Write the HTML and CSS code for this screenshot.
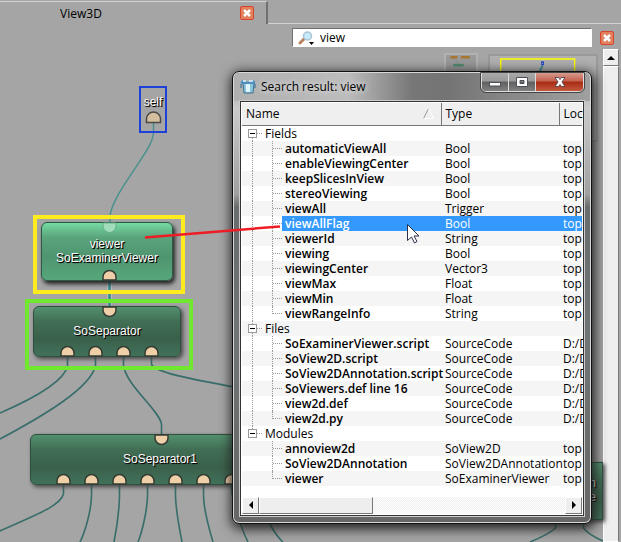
FILE: index.html
```html
<!DOCTYPE html>
<html lang="en">
<head>
<meta charset="utf-8">
<title>View3D</title>
<link rel="stylesheet" href="styles.css">
</head>
<body>
<div class="app">
  <header class="tabs">
    <div class="tab"><span class="tab-title">View3D</span><button class="close" aria-label="Close tab"><svg viewBox="0 0 12 12"><path d="M3 3l6 6M9 3l-6 6"/></svg></button></div>
    <div class="tab-rest"></div>
  </header>
  <div class="search-row">
    <label class="search">
      <svg class="lens" viewBox="0 0 18 14"><path d="M2 12l5-5" stroke="#b98260" stroke-width="3" stroke-linecap="round"/><circle cx="9.500" cy="5" r="4" fill="#c5ebfa" stroke="#a9c4d6" stroke-width="1.500"/><path d="M11 11h5l-2.500 3z" fill="#000"/></svg>
      <input type="text" value="view" aria-label="Search">
    </label>
    <button class="close" aria-label="Close search"><svg viewBox="0 0 12 12"><path d="M3 3l6 6M9 3l-6 6"/></svg></button>
  </div>
  <main class="workspace">
    <div class="vbar"><button class="sb" aria-label="Scroll up"><svg viewBox="0 0 8 8"><path d="M4 2l4 4H0z"/></svg></button><div class="vthumb"></div></div>
  </main>

  <div class="overview small"><svg viewBox="0 0 34 40"><path d="M5 1h8v3H5zM17 1h10v3H17z" fill="#a8762c"/><path d="M9 4l6 6" stroke="#678" stroke-dasharray="1 1"/><path d="M8 10h12v3H8z" fill="#4f8a6c"/></svg></div>
  <div class="overview large"><svg viewBox="0 0 109 86"><path d="M11 40V3h76v37" fill="none" stroke="#ff0" stroke-width="1.500"/><path d="M54 10l-4 8" stroke="#3f8f8c" stroke-width="2"/><rect x="53" y="6" width="2" height="3" fill="#aac" stroke="#2746c4"/></svg></div>

  <svg class="wires" width="621" height="542" aria-hidden="true">
    <g fill="none" stroke="#4a918d" stroke-width="1.500">
      <path d="M153.500 122V133C153 151 113 191 110 216V224"/>
      <path d="M109.500 281V307" stroke="#b9cccc" stroke-width="4"/><path d="M109.500 281V307" stroke="#36858b" stroke-width="2.500"/>
    </g>
    <g fill="none" stroke="#376d6a" stroke-width="1.600">
      <path d="M67.500 357V366C64 382 30 400 0 413"/>
      <path d="M95.500 357V366C90 388 45 415 0 439"/>
      <path d="M123.500 357V366C127 386 159 410 161.500 424V434"/>
      <path d="M151.500 357V364C153 372 190 379 240 388"/>
      <path d="M63.500 485V494C60 507 30 517 0 531"/>
      <path d="M91.500 485V496C91 512 85 532 80 542"/>
      <path d="M119.500 485V496C119 515 116 532 114 542"/>
      <path d="M147.500 485V496C147 512 142 532 138 542"/>
      <path d="M175.500 485V496C176 512 180 532 182 542"/>
      <path d="M203.500 485V496C204 512 210 532 213 542"/>
      <path d="M231.500 485C231 500 242 530 248 542M260 500C266 520 276 536 283 542"/>
      <path d="M555.500 518V528C550 533 540 538 530 542M583.500 518V528C588 534 596 538 603 541"/>
    </g>
  </svg>

  <section class="node self"><span>self</span></section>
  <div class="halo yellow"></div>
  <div class="halo green"></div>
  <section class="node viewer"><span>viewer<br>SoExaminerViewer</span></section>
  <section class="node separator"><span>SoSeparator</span></section>
  <section class="node separator1"><span>SoSeparator1</span></section>
  <section class="node remote"><span>h<br>e</span></section>

  <svg class="ports" width="621" height="542" aria-hidden="true">
    <defs>
      <path id="out" d="M-6.500 0V-3A6.500 6.500 0 0 1 6.500-3V0z" fill="#efcfa8" stroke="#333b33" stroke-width="1.500"/>
      <path id="in" d="M-6.500 0V3A6.500 6.500 0 0 0 6.500 3V0z" fill="#efcfa8" stroke="#333b33" stroke-width="1.500"/>
    </defs>
    <path d="M146.500 122.500V119a7 7 0 0 1 14 0v3.500z" fill="#d5bda0" stroke="#4c4a46" stroke-width="1.500"/>
    <path d="M103 223V226a6.500 6.500 0 0 0 13 0V223z" fill="#a1dcbc" stroke="#67b088"/>
    <use href="#out" x="109.500" y="280"/><use href="#in" x="109.500" y="307"/>
    <use href="#out" x="67.500" y="356"/><use href="#out" x="95.500" y="356"/><use href="#out" x="123.500" y="356"/><use href="#out" x="151.500" y="356"/>
    <use href="#in" x="161.500" y="435"/>
    <use href="#out" x="63.500" y="484"/><use href="#out" x="91.500" y="484"/><use href="#out" x="119.500" y="484"/><use href="#out" x="147.500" y="484"/><use href="#out" x="175.500" y="484"/><use href="#out" x="203.500" y="484"/><use href="#out" x="231.500" y="484"/>
  </svg>

  <section class="window">
    <header class="titlebar">
      <svg class="app-icon" viewBox="0 0 16 16"><path d="M3 5h11l-1 10H4z" fill="#8cc4dc" stroke="#3d718e"/><path d="M6 6h4v8H6z" fill="#dff4fb"/><path d="M1 3l3-1 4 2 4-2 3 1v3H1z" fill="#4f8fbd"/><path d="M3 3h3M9 3h4" stroke="#e8f6ff" stroke-width="1.500"/><path d="M1 6v4M15 6v4" stroke="#2f6a92"/></svg>
      <h1>Search result: view</h1>
      <div class="controls">
        <button aria-label="Minimize"><svg viewBox="0 0 14 12"><rect x="1.500" y="6.500" width="11" height="3.500" fill="#fff" stroke="#4c5058"/></svg></button>
        <button aria-label="Maximize"><svg viewBox="0 0 14 12"><path d="M1.500 1.500h11v9h-11zM5 4.500v3h4v-3z" fill="#fff" fill-rule="evenodd" stroke="#4c5058"/></svg></button>
        <button class="quit" aria-label="Close"><svg viewBox="0 0 14 12"><path d="M2 1.500h3.500L7 3.500l1.500-2H12L9 6l3 4.500H8.500L7 8.500l-1.500 2H2L5 6z" fill="#fff" stroke="#5a4a50"/></svg></button>
      </div>
    </header>
    <div class="content">
      <table>
        <colgroup><col class="c-name"><col class="c-type"><col></colgroup>
        <thead><tr><th>Name<svg class="sort" viewBox="0 0 11 11"><path d="M0.500 10.500L5.500 0.500" stroke="#999"/><path d="M5.500 0.500l5 10h-10" stroke="#fff" fill="none"/></svg></th><th>Type</th><th>Loc</th></tr></thead>
        <tbody>
          <tr class="group first"><td colspan="3"><button class="toggle" aria-label="Collapse Fields"></button>Fields</td></tr>
          <tr><td>automaticViewAll</td><td>Bool</td><td>top</td></tr>
          <tr><td>enableViewingCenter</td><td>Bool</td><td>top</td></tr>
          <tr><td>keepSlicesInView</td><td>Bool</td><td>top</td></tr>
          <tr><td>stereoViewing</td><td>Bool</td><td>top</td></tr>
          <tr><td>viewAll</td><td>Trigger</td><td>top</td></tr>
          <tr class="selected"><td>viewAllFlag</td><td>Bool</td><td>top</td></tr>
          <tr><td>viewerId</td><td>String</td><td>top</td></tr>
          <tr><td>viewing</td><td>Bool</td><td>top</td></tr>
          <tr><td>viewingCenter</td><td>Vector3</td><td>top</td></tr>
          <tr><td>viewMax</td><td>Float</td><td>top</td></tr>
          <tr><td>viewMin</td><td>Float</td><td>top</td></tr>
          <tr class="last"><td>viewRangeInfo</td><td>String</td><td>top</td></tr>
          <tr class="group"><td colspan="3"><button class="toggle" aria-label="Collapse Files"></button>Files</td></tr>
          <tr><td>SoExaminerViewer.script</td><td>SourceCode</td><td>D:/D</td></tr>
          <tr><td>SoView2D.script</td><td>SourceCode</td><td>D:/D</td></tr>
          <tr><td>SoView2DAnnotation.script</td><td>SourceCode</td><td>D:/D</td></tr>
          <tr><td>SoViewers.def line 16</td><td>SourceCode</td><td>D:/D</td></tr>
          <tr><td>view2d.def</td><td>SourceCode</td><td>D:/D</td></tr>
          <tr class="last"><td>view2d.py</td><td>SourceCode</td><td>D:/D</td></tr>
          <tr class="group end"><td colspan="3"><button class="toggle" aria-label="Collapse Modules"></button>Modules</td></tr>
          <tr class="tail"><td>annoview2d</td><td>SoView2D</td><td>top</td></tr>
          <tr class="tail"><td>SoView2DAnnotation</td><td>SoView2DAnnotation</td><td>top</td></tr>
          <tr class="tail last"><td>viewer</td><td>SoExaminerViewer</td><td>top</td></tr>
        </tbody>
      </table>
      <div class="hbar"><button class="sb" aria-label="Scroll left"><svg viewBox="0 0 8 8"><path d="M2 4l4-4v8z"/></svg></button><div class="hthumb"></div><button class="sb" aria-label="Scroll right"><svg viewBox="0 0 8 8"><path d="M6 4L2 0v8z"/></svg></button></div>
    </div>
  </section>

  <svg class="marks" width="621" height="542" aria-hidden="true">
    <path d="M145 237.500L280 226.500" stroke="#ee1c24" stroke-width="2.500"/>
    <path d="M407.500 224.500v16l4-3.500 3 6 2.500-1.500-3-5.500h5z" fill="#fff" stroke="#2b2f4a"/>
  </svg>
</div>
</body>
</html>
```
FILE: styles.css
```css
* { box-sizing: border-box; }
body { margin: 0; font: 12px/15px "Open Sans", "Noto Sans", sans-serif; color: #000; }
button { padding: 0; margin: 0; border: 0; background: none; display: grid; place-items: center; }
.app { position: relative; min-height: 100vh; overflow: hidden; background: #a5a5a5; display: flex; flex-direction: column; }

.tabs { display: flex; height: 24px; }
.tab { width: 268px; border-top: 1px solid #d2d2d2; border-right: 2px solid #707070; margin-top: 1px; display: flex; align-items: center; padding: 0 12px 0 0; }
.tab-title { flex: 1; text-align: center; padding-right: 78px; }
.tab-rest { flex: 1; border-bottom: 1px solid #d2d2d2; }
.close { width: 14px; height: 14px; flex: none; border: 1px solid #d8432f; border-radius: 2px; background: #e0805c; }
.close svg { width: 12px; height: 12px; fill: none; stroke: #fff; stroke-width: 2.5px; }
.search-row { display: flex; align-items: center; gap: 8px; padding: 4px 7px 0 292px; height: 23px; }
.search { flex: 1; height: 19px; background: #fff; border: 1px solid #707070; border-right-color: #fff; border-bottom-color: #fff; display: flex; align-items: center; padding-left: 5px; gap: 4px; }
.lens { width: 18px; height: 14px; fill: none; }
.search input { flex: 1; min-width: 0; border: 0; padding: 0; outline: 0; font: inherit; background: none; }
.workspace { flex: 1; display: flex; justify-content: flex-end; }
.vbar { width: 18px; display: flex; flex-direction: column; background: #eee; border-right: 2px solid #a5a5a5; margin-top: 2px; }
.sb { width: 17px; height: 17px; flex: none; background: #eee; border: 1px solid #fff; border-right-color: #777; border-bottom-color: #777; }
.vbar .sb { width: 16px; }
.sb svg { width: 8px; height: 8px; }
.vthumb { flex: 1; background: #eee; border: 1px solid #fff; border-right-color: #777; }

.overview { position: absolute; border: 2px solid #b2b2b2; background: #999; }
.overview svg { display: block; width: 100%; }
.small { left: 444px; top: 53px; width: 34px; height: 40px; }
.large { left: 488px; top: 54px; width: 110px; height: 88px; background: #b0b0b0; border-color: #999; }
.wires, .ports, .marks { position: absolute; left: 0; top: 0; }

.node { position: absolute; display: grid; place-items: center; text-align: center; color: #fff; font: 12px/14px "Liberation Sans", Arial, sans-serif; text-shadow: 1px 1px 1px #000, 1px 1px 0 #222; border-radius: 6px; padding-bottom: 2px; }
.self { left: 139px; top: 86px; width: 28px; height: 47px; border: 2px solid #1c40d8; border-radius: 0; align-items: start; padding-top: 7px; }
.halo { position: absolute; border: 4px solid; }
.yellow { left: 33px; top: 215px; width: 152px; height: 79px; border-color: #ffec1f; }
.green { left: 25px; top: 299px; width: 168px; height: 71px; border-color: #6fe82d; }
.viewer { left: 41px; top: 222px; width: 132px; height: 59px; background: linear-gradient(#75dba3, #5aa47c 25%, #4f9570 60%, #57a67b); border: 1px solid #2c5a43; box-shadow: 2px 3px 4px #222; }
.separator { left: 33px; top: 306px; width: 148px; height: 51px; }
.separator1 { left: 30px; top: 434px; width: 260px; height: 51px; }
.remote { left: 500px; top: 462px; width: 103px; height: 58px; border-radius: 0; justify-items: end; padding-right: 6px; }
.separator, .separator1, .remote { background: linear-gradient(#52906e, #416e55 30%, #3a604a 65%, #41715a); border: 1px solid #2f4f3f; box-shadow: 2px 2px 4px #444; }

.window { position: absolute; left: 232px; top: 71px; width: 360px; border: 1px solid #111; border-radius: 7px; padding: 0 7px 7px; background: linear-gradient(#a0a0a0, #c9c9c9 8%, #a0a0a0 27%, #686c6c 30%, #707474 60%, #666); box-shadow: inset 0 0 0 1px #d8d8d8, 1px 3px 12px 2px #222; }
.titlebar { display: flex; height: 28px; background: linear-gradient(90deg, #b0b0b0, #bcbcbc 32%, #777 50%, #747474 60%, #a0a0a0); margin: 1px -6px 0; padding: 0 6px; border-radius: 6px 6px 0 0; }
.app-icon { width: 16px; height: 16px; margin: 5px 5px 0 0; }
h1 { margin: 6px 0 0; font: inherit; flex: 1; text-shadow: 0 0 6px #fff; }
.controls { display: flex; height: 19px; border: 1px solid #ddd; border-top: 0; border-radius: 0 0 5px 5px; overflow: hidden; outline: 1px solid #444; }
.controls button { width: 27px; background: linear-gradient(#aaa, #999 45%, #606060 50%, #808080); border-right: 1px solid #ddd; }
.controls svg { width: 14px; height: 12px; }
.controls .quit { width: 47px; background: linear-gradient(#d59a8e, #c4604c 45%, #a62b14 50%, #c5593c); border: 0; }
.content { border: 1px solid #333; outline: 1px solid #ccc; background: #fff; overflow: hidden; padding: 1px; }
table { width: 100%; border-collapse: collapse; table-layout: fixed; }
.c-name { width: 199px; }
.c-type { width: 118px; }
th { height: 22px; text-align: left; font-weight: 400; background: #efefef; padding: 0 4px; border-right: 1px solid #777; border-bottom: 1px solid #777; white-space: nowrap; }
th:last-child { border-right: 0; }
.sort { width: 11px; height: 11px; float: right; margin: 2px 3px 0 0; }
td { height: 15px; padding: 0 0 0 4px; line-height: 15px; white-space: nowrap; }
tbody tr:nth-child(even) { background: #f5f5f5; }
td:first-child { font-weight: 600; padding-left: 43px; position: relative; }
tbody td:first-child::before { content: ""; position: absolute; left: 10px; top: 0; bottom: 0; border-left: 1px dotted #999; }
tbody td:first-child::after { content: ""; position: absolute; left: 30px; top: 0; height: 15px; width: 9px; border-left: 1px dotted #999; background: linear-gradient(90deg, #999 50%, transparent 50%) 0 7px / 2px 1px repeat-x; }
tbody .last td:first-child::after { height: 8px; }
tbody .tail td:first-child::before { display: none; }
tbody .group td:first-child { font-weight: 400; padding-left: 23px; }
tbody .group td:first-child::after { left: 15px; width: 5px; border: 0; }
tbody .first td:first-child::before { top: 8px; }
tbody .end td:first-child::before { bottom: 8px; }
.toggle { position: absolute; z-index: 1; left: 6px; top: 3px; width: 9px; height: 9px; border: 1px solid #999; background: linear-gradient(#000, #000) center / 5px 1px no-repeat #fff; }
.selected td { background: #3399ff; color: #fff; }
.selected td:first-child { background: linear-gradient(90deg, #fff 40px, #3399ff 40px); outline: 0; }
.hbar { display: flex; margin-top: 11px; background: repeating-conic-gradient(#fff 0 25%, #eee 0 50%) 0 0 / 2px 2px; }
.hthumb { width: 114px; margin-right: auto; background: #eee; border: 1px solid #fff; border-right-color: #777; border-bottom-color: #777; }
```
